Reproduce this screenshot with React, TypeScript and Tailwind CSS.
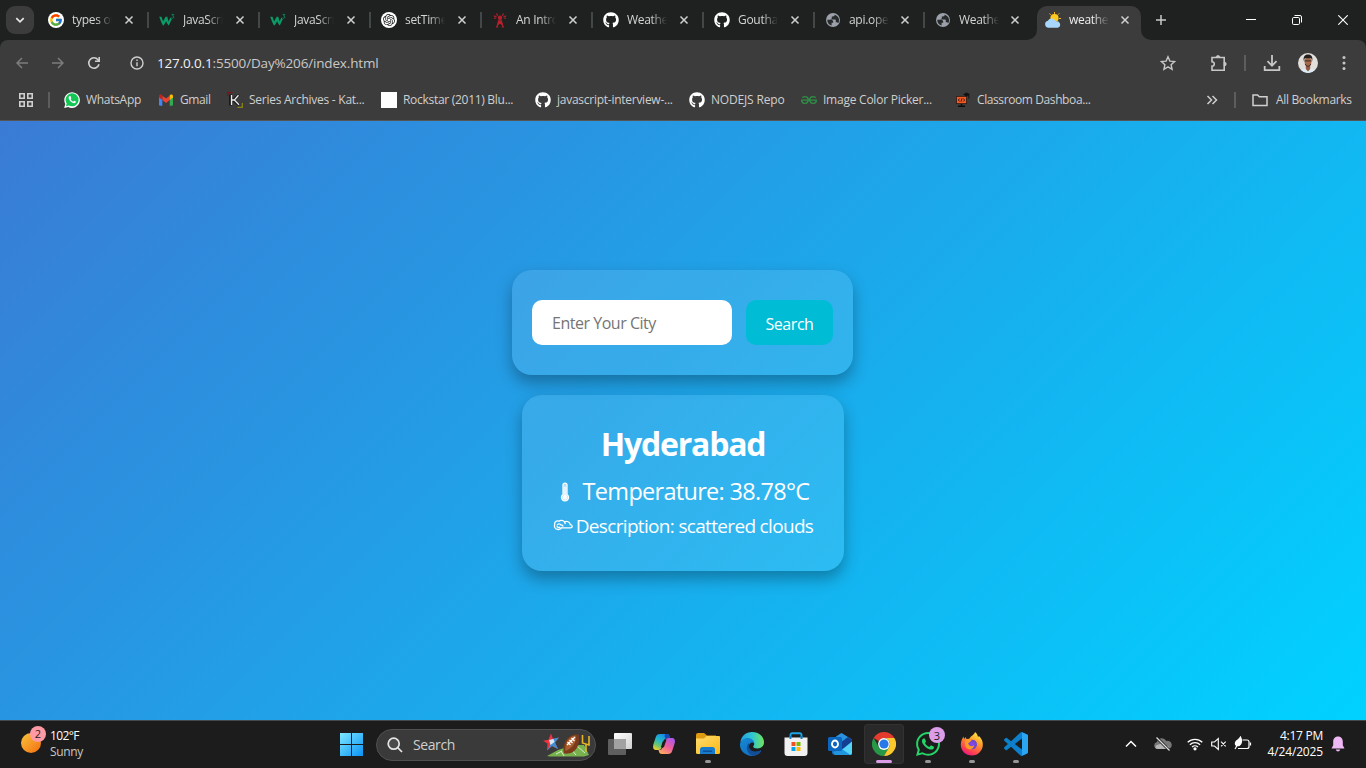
import type { ReactNode } from 'react';
import { FcGoogle } from 'react-icons/fc';
import { FaGithub, FaWhatsapp } from 'react-icons/fa';
import { SiGeeksforgeeks, SiOpenai } from 'react-icons/si';

/* ---------- favicons ---------- */

const GoogleIcon = () => (
  <span className="flex size-4 items-center justify-center rounded-full bg-white">
    <FcGoogle className="size-[14px]" />
  </span>
);

const W3Icon = () => (
  <svg viewBox="0 0 16 16" className="size-4" fill="none">
    <path d="M.2 4.800h2.300c.7 1.600 1 3.200 1.600 4.700C5 8 5.500 6.500 6.700 4.800h1.600c.5 1.700.8 3.200 1.300 4.700.7-1.400 1-2.500 1.900-3.900l1.300 1.700c-1.200 2-1.700 4-3 6.200-1.400-1.200-1.900-2.500-2.700-4.200-1 1.700-1.600 3.200-3 4.400C2.300 11 1.500 7.800.2 4.800Z" fill="#0b9b66" />
    <path d="M12.600 2.400h2.200l-1.200 1.600c1.700.2 1.600 2.300-.1 2.200-.5 0-.8-.2-1-.5" stroke="#0b8f60" strokeWidth=".9" />
  </svg>
);

const OpenAiIcon = () => (
  <span className="flex size-4 items-center justify-center rounded-full bg-white">
    <SiOpenai className="size-[12px] text-[#222]" />
  </span>
);

const TowerIcon = () => (
  <svg viewBox="0 0 16 16" className="size-4" fill="none" stroke="#b8202c" strokeWidth="1.200">
    <path d="M7.600 6 4.800 15.200M8.400 6l2.800 9.200M6.600 9.500l4 3.500M9.400 9.500l-4 3.500M6.600 9.300h2.800M4 15h2.300M9.700 15H12" />
    <circle cx="8" cy="5.600" r="1.500" fill="#b8202c" />
    <path d="M5.600 3.700 4.500 1.500M4.600 5.300 2 3.800M2 6.200l1.500.2M10.400 3.700l1.100-2.200M11.400 5.300 14 3.800M14 6.200l-1.500.2" />
  </svg>
);

const GithubIcon = () => <FaGithub className="size-4 text-white" />;

const GlobeIcon = () => (
  <svg viewBox="0 0 16 16" className="size-4">
    <circle cx="8" cy="8" r="7" fill="#9ba0a9" />
    <path d="M2.300 7.800h3.500c1.500 0 2.400.8 2.400 2.200v.8H6.600v2.700C4 12.900 2.200 10.700 2.300 7.800ZM9.700 2.700c-.1 1.200-.7 1.700-1.800 1.700H6.800v1.700c0 .7-.5 1-1.200 1v.4h4.200c.7 0 1 .4 1 1v1.700h.8c.8 0 1.200.4 1.500 1.100 1.800-2.300 1.400-7-3.400-8.600Z" fill="#272b2c" />
  </svg>
);

const WeatherIcon = () => (
  <svg viewBox="0 0 16 16" className="size-4">
    <path d="M9.500 0v2M4.500 1.500l1.200 1.400M14.300 1.300 13 2.700M16 6.500h-2M14.300 11.500 13 10" stroke="#f7b21a" strokeWidth="1" />
    <circle cx="9.500" cy="6" r="4.100" fill="#ffc81e" />
    <path d="M3.700 15.800a3.600 3.600 0 0 1-.8-7.100 4.300 4.300 0 0 1 7.900.8 3.200 3.200 0 1 1 2 6.300Z" fill="#a8d7fb" />
  </svg>
);

const WhatsappFavicon = () => (
  <svg viewBox="0 0 16 16" className="size-4">
    <path d="M.2 16 1.300 12A7.800 7.800 0 1 1 4.200 14.900z" fill="#fff" />
    <path d="m1.900 14.200.8-2.700a6.500 6.500 0 1 1 2.200 2z" fill="#14c656" />
    <path d="M5.500 4.100c-1.200.8-1 2.200-.3 3.400 1.200 2 2.700 3.400 4.800 3.800 1 .1 2-.7 1.900-1.700L10.100 8.700l-.9 1C8 9.200 7.200 8.400 6.600 7.300l.7-.9-.7-2.100c-.3-.3-.8-.4-1.100-.2z" fill="#fff" />
  </svg>
);

const GmailIcon = () => (
  <svg viewBox="0 0 16 16" className="size-4">
    <path d="M1 4.500 4.300 7v6.700H2.200A1.200 1.200 0 0 1 1 12.500z" fill="#4285f4" />
    <path d="M15 4.500 11.700 7v6.700h2.100a1.200 1.200 0 0 0 1.200-1.200z" fill="#34a853" />
    <path d="M4.300 3.700 8 6.500l3.700-2.800v4.400L8 10.900 4.300 8.100z" fill="#ea4335" />
    <path d="M1 4c0-1.600 1.700-2 2.700-1.200l.6.500v4.800L1 5.600z" fill="#c5221f" />
    <path d="M15 4c0-1.600-1.700-2-2.700-1.200l-.6.500v4.800L15 5.600z" fill="#fbbc04" />
  </svg>
);

const KIcon = () => (
  <svg viewBox="0 0 16 16" className="size-4" fill="none">
    <path d="M.7 4V.7H5.500" stroke="#7f1118" strokeWidth="1.300" />
    <path d="M10.500 15.300h4.800V11" stroke="#8a8113" strokeWidth="1.300" />
    <path d="M3.500 2.500v11M6 8l6-5M6 8l6 5" stroke="#151515" strokeWidth="2.600" />
    <path d="M4.500 3v10M5 8h2.300M11.500 3.200 7.300 8l4.700 4.800" stroke="#ececec" strokeWidth="1.300" />
  </svg>
);

const BlankIcon = () => <span className="block size-4 bg-white" />;
const GfgIcon = () => <SiGeeksforgeeks className="size-4 text-[#2f8d46]" />;

const ClassroomIcon = () => (
  <svg viewBox="0 0 16 16" className="size-4">
    <path d="M8 2.500 11.500.6 15 2.300 11.500 4.500z" fill="#15110f" />
    <rect x="1" y="4" width="11" height="8" rx="1" fill="#1b1310" />
    <rect x="1.800" y="4.700" width="9.400" height="6.600" rx=".6" fill="#ef5a26" />
    <path d="M4.700 6.500 3.300 8l1.400 1.500M8.300 6.500 9.700 8 8.300 9.500M7 6.300 6 9.700" fill="none" stroke="#25140e" strokeWidth=".9" />
    <path d="M6.500 12v2M3 14.300h7" stroke="#0d0d0d" strokeWidth="1.400" />
    <path d="m13.700 2.800.3 4" stroke="#111" />
  </svg>
);

/* ---------- browser chrome ---------- */

type TabInfo = { icon: ReactNode; title: string; wide: boolean; last?: boolean };

const tabs: TabInfo[] = [
  { icon: <GoogleIcon />, title: 'types of', wide: true },
  { icon: <W3Icon />, title: 'JavaScri', wide: true },
  { icon: <W3Icon />, title: 'JavaScri', wide: true },
  { icon: <OpenAiIcon />, title: 'setTime', wide: true },
  { icon: <TowerIcon />, title: 'An Intro', wide: true },
  { icon: <GithubIcon />, title: 'Weathe', wide: true },
  { icon: <GithubIcon />, title: 'Goutha', wide: true },
  { icon: <GlobeIcon />, title: 'api.ope', wide: false },
  { icon: <GlobeIcon />, title: 'Weathe', wide: false, last: true },
];

const CloseX = () => (
  <svg viewBox="0 0 10 10" className="size-[10px] shrink-0 text-[#d0d0d0]" stroke="currentColor" strokeWidth="1.500">
    <path d="M1.500 1.500l7 7M8.500 1.500l-7 7" />
  </svg>
);

const titleClass =
  'w-10 shrink-0 overflow-hidden whitespace-nowrap text-[12px] leading-4 tracking-[-0.300px] [mask-image:linear-gradient(to_right,black_60%,transparent_100%)]';

const Tab = ({ icon, title, wide, last }: TabInfo) => (
  <div className={`flex h-10 shrink-0 items-center ${wide ? 'w-[111px] pl-[10px]' : 'w-[110px] pl-[10px]'}`}>
    {icon}
    <span className={`ml-2 text-[#d3d5d5] ${titleClass}`}>{title}</span>
    <span className={`mr-auto ${wide ? 'ml-3' : 'ml-[11px]'}`}><CloseX /></span>
    <span className={`h-4 w-[2px] ${last ? '' : 'bg-[#444747]'}`} />
  </div>
);

const TabStrip = () => (
  <div className="flex h-10 bg-[#1f2120]">
    <button className="ml-[6px] mr-1 mt-[6px] flex size-7 shrink-0 items-center justify-center rounded-[9px] bg-[#3c3c3c]">
      <svg viewBox="0 0 10 10" className="size-[10px]" fill="none" stroke="#e6e6e6" strokeWidth="1.700">
        <path d="M1.300 3.200 5 6.900l3.700-3.700" />
      </svg>
    </button>
    {tabs.map((t, i) => <Tab key={i} {...t} />)}
    <div className="-ml-2 flex shrink-0 items-end">
      <svg viewBox="0 0 10 10" className="size-[10px]"><path d="M10 0v10H0A10 10 0 0 0 10 0Z" fill="#3c3c3c" /></svg>
      <div className="flex h-[34px] w-[104px] items-center rounded-t-[10px] bg-[#3c3c3c] pb-[6px] pl-2">
        <WeatherIcon />
        <span className={`ml-2 text-[#ececec] ${titleClass}`}>weathe</span>
        <span className="ml-[11px]"><CloseX /></span>
      </div>
      <svg viewBox="0 0 10 10" className="size-[10px]"><path d="M0 0v10h10A10 10 0 0 1 0 0Z" fill="#3c3c3c" /></svg>
    </div>
    <div className="flex h-10 items-center pl-[4px]">
      <svg viewBox="0 0 12 12" className="size-3" stroke="#c8c8c8" strokeWidth="1.500"><path d="M6 1v10M1 6h10" /></svg>
    </div>
    <div className="ml-auto flex h-10 items-center gap-[36px] pr-[18px] text-white">
      <svg viewBox="0 0 10 10" className="size-[10px]" stroke="currentColor"><path d="M0 4.500h10" /></svg>
      <svg viewBox="0 0 10 10" className="size-[10px]" fill="none" stroke="currentColor">
        <rect x=".5" y="2.500" width="7" height="7" rx="1.200" /><path d="M2.500.5H8A1.500 1.500 0 0 1 9.500 2v5.500" />
      </svg>
      <svg viewBox="0 0 10 10" className="size-[10px]" stroke="currentColor" strokeWidth="1.100"><path d="M.3.3l9.400 9.400M9.700.3.3 9.700" /></svg>
    </div>
  </div>
);

const Avatar = () => (
  <svg viewBox="0 0 20 20" className="size-5">
    <defs><clipPath id="face"><circle cx="10" cy="10" r="10" /></clipPath></defs>
    <g clipPath="url(#face)">
      <rect width="20" height="20" fill="#e2dfdb" />
      <path d="M2 20c1-4 4-5 8-5s7 1 8 5z" fill="#dceaf4" />
      <path d="M7.800 12h4.400v4L10 18.500 7.800 16z" fill="#925c42" />
      <ellipse cx="10" cy="8.800" rx="3.500" ry="4.700" fill="#a66b4d" />
      <path d="M5.800 8C5 4 6.500 1.500 10 1.500S15 4 14.200 8l-1-2.700H6.800z" fill="#25201e" />
      <path d="M6.500 7.900h7M7.300 11c1 3 4.400 3 5.400 0" fill="none" stroke="#3b2822" strokeWidth="1" />
    </g>
  </svg>
);

const Toolbar = () => (
  <div className="flex h-[46px] items-center rounded-t-[8px] bg-[#3c3c3c] pl-4 pr-[14px] text-[#c7c7c7]">
    <svg viewBox="0 0 12 12" className="size-3" fill="none" stroke="#7c7c7c" strokeWidth="1.500"><path d="M12 6H1M6 1 1 6l5 5" /></svg>
    <svg viewBox="0 0 12 12" className="ml-6 size-3" fill="none" stroke="#7c7c7c" strokeWidth="1.500"><path d="M0 6h11M6 1l5 5-5 5" /></svg>
    <svg viewBox="0 0 14 14" className="ml-[23px] size-[14px]" fill="none" stroke="#cfcfcf" strokeWidth="1.600">
      <path d="M12 8.300A5.200 5.200 0 1 1 11 3.700L12 5" /><path d="M12.200 1v4.200H8" />
    </svg>
    <svg viewBox="0 0 14 14" className="ml-[29px] size-[14px]" fill="none" stroke="#cfcfcf" strokeWidth="1.400">
      <circle cx="7" cy="7" r="6" /><path d="M7 6.200v4M7 3.600V5" />
    </svg>
    <span className="ml-[13px] whitespace-nowrap text-[13.500px] leading-5 tracking-[-0.160px] text-[#c9c9c9]">
      <span className="text-[#f2f2f2]">127.0.0.1</span>:5500/Day%206/index.html
    </span>
    <svg viewBox="0 0 16 16" className="ml-auto size-4" fill="none" stroke="currentColor" strokeWidth="1.400">
      <path d="m8 1.800 1.900 4.300 4.700.5-3.500 3.100 1 4.600L8 11.900l-4.100 2.400 1-4.600-3.500-3.100 4.700-.5z" />
    </svg>
    <svg viewBox="0 0 18 18" className="ml-[34px] size-[18px]" fill="none" stroke="currentColor" strokeWidth="1.600">
      <path d="M2 3.500h12.200v12.700H2v-4c2.800.1 3.300-4.500 0-4.500z" /><path d="M6 3.500a2 2 0 0 1 4 0zM14.200 8a2 2 0 0 1 0 4z" fill="currentColor" strokeWidth=".8" />
    </svg>
    <span className="ml-[16px] h-4 w-[2px] bg-[#5d5d5d]" />
    <svg viewBox="0 0 18 18" className="ml-[17px] size-[18px]" fill="none" stroke="currentColor" strokeWidth="1.800">
      <path d="M9 1v10.500M4.500 7.200 9 11.700l4.500-4.500M1.700 12v4.200h14.600V12" />
    </svg>
    <span className="ml-[17px]"><Avatar /></span>
    <svg viewBox="0 0 16 16" className="ml-[18px] size-4" fill="currentColor">
      <circle cx="8" cy="2.500" r="1.500" /><circle cx="8" cy="8" r="1.500" /><circle cx="8" cy="13.500" r="1.500" />
    </svg>
  </div>
);

const bookmarks = [
  { icon: <WhatsappFavicon />, label: 'WhatsApp', cls: 'w-[94px] tracking-[-0.300px]' },
  { icon: <GmailIcon />, label: 'Gmail', cls: 'w-[69px] tracking-[-0.400px]' },
  { icon: <KIcon />, label: 'Series Archives - Kat...', cls: 'w-[154px] tracking-[-0.260px]' },
  { icon: <BlankIcon />, label: 'Rockstar (2011) Blu...', cls: 'w-[154px] tracking-[-0.290px]' },
  { icon: <GithubIcon />, label: 'javascript-interview-...', cls: 'w-[154px] tracking-[-0.260px]' },
  { icon: <GithubIcon />, label: 'NODEJS Repo', cls: 'w-[112px] tracking-[-0.170px]' },
  { icon: <GfgIcon />, label: 'Image Color Picker...', cls: 'w-[154px] tracking-[-0.240px]' },
  { icon: <ClassroomIcon />, label: 'Classroom Dashboa...', cls: 'w-[154px] tracking-[-0.400px]' },
];

const BookmarkBar = () => (
  <div className="flex h-[35px] items-center border-b border-[#555] bg-[#3c3c3c] pb-[6px] pl-[19px] text-[12px] leading-4 text-[#cfcfcf]">
    <svg viewBox="0 0 14 14" className="size-[14px]" fill="none" stroke="currentColor" strokeWidth="1.600">
      <path d="M.8.8h4.400v4.400H.8zM8.800.8h4.400v4.400H8.800zM.8 8.800h4.400v4.400H.8zM8.800 8.800h4.400v4.400H8.800z" />
    </svg>
    <span className="ml-[15px] mr-[14px] h-4 w-[2px] bg-[#5d5d5d]" />
    {bookmarks.map((b) => (
      <div key={b.label} className={`flex shrink-0 items-center gap-[6px] whitespace-nowrap ${b.cls}`}>
        {b.icon}<span>{b.label}</span>
      </div>
    ))}
    <svg viewBox="0 0 12 12" className="ml-auto size-3" fill="none" stroke="currentColor" strokeWidth="1.500"><path d="m1.500 2 4 4-4 4M6.500 2l4 4-4 4" /></svg>
    <span className="ml-[16px] h-4 w-[2px] bg-[#5d5d5d]" />
    <svg viewBox="0 0 16 14" className="ml-[16px] h-[14px] w-4" fill="none" stroke="currentColor" strokeWidth="1.500">
      <path d="M1 2h4.600l1.700 1.800H15v8.700H1z" />
    </svg>
    <span className="ml-2 w-[90px] whitespace-nowrap tracking-[-0.330px]">All Bookmarks</span>
  </div>
);

/* ---------- weather page ---------- */

const WeatherPage = () => (
  <main className="flex h-[599px] flex-col items-center gap-5 bg-[linear-gradient(135deg,#3a7bd5,#00d2ff)] pt-[149px]">
    <form className="mr-px flex h-[105px] w-[341px] items-center justify-between rounded-[20px] bg-white/10 px-5 shadow-[0_8px_16px_rgba(0,0,0,0.300)]">
      <input
        placeholder="Enter Your City"
        className="h-[45px] w-[200px] rounded-[10px] bg-white px-5 text-[16px] tracking-[-0.480px] outline-none placeholder:text-[#757575]"
      />
      <button type="button" className="h-[45px] w-[87px] rounded-[10px] bg-[#00bcd4] pt-[2px] text-[16px] tracking-[-0.450px] text-white">Search</button>
    </form>
    <section className="flex h-[176px] w-[322px] flex-col items-center rounded-[20px] bg-white/10 pt-[27px] text-white shadow-[0_8px_16px_rgba(0,0,0,0.300)]">
      <h2 className="text-[32px] font-bold leading-[43px] tracking-[-1.200px]">Hyderabad</h2>
      <p className="mt-[10px] flex h-8 items-center whitespace-nowrap text-[23.500px] leading-8 tracking-[-0.700px]">
        <svg viewBox="0 0 16 22" className="mr-[10px] mt-[2px] h-[20px] w-4 shrink-0">
          <path d="M5.800 3.400a2.200 2.200 0 0 1 4.400 0v10.300a3.900 3.900 0 1 1-4.400 0z" fill="#ffffff99" stroke="#fff" strokeWidth="1.400" />
          <path d="M8 5v11" stroke="#fff" strokeWidth="1.500" /><circle cx="8" cy="17" r="2.600" fill="#fff" />
        </svg>
        Temperature: 38.78°C
      </p>
      <p className="mt-[7px] flex h-6 items-center whitespace-nowrap text-[19px] leading-6 tracking-[-0.670px]">
        <svg viewBox="0 0 20 12" className="-mt-[3px] mr-[3px] h-3 w-5 shrink-0" fill="none" stroke="#fff" strokeWidth="1.300">
          <path d="M8 8.800h9.500c2.300 0 2.300-3-.2-3.200C16.800 3 14 1.500 11.500 2.800 10 1 7.500.9 6 2.200 3.400 1.300 1.300 3 1.700 5.200c-.9 2.300.3 5.400 3.500 5.300C7 10.300 8.500 9.500 8.500 8" />
          <path d="M4 6.500C4.300 4.300 7.200 4.300 8 6c1.200-.3 2 .6 1.800 1.700M11.500 2.800l.8 2.300M7.300 8c-1.500.8-3 .6-3.500-.8" />
        </svg>
        Description: scattered clouds
      </p>
    </section>
  </main>
);

/* ---------- taskbar ---------- */

const StartIcon = () => (
  <svg viewBox="0 0 23 23" className="size-[23px]">
    <defs><linearGradient id="win" x1="0" y1="0" x2="1" y2="1"><stop stopColor="#7ee8ff" /><stop offset="1" stopColor="#0a93f5" /></linearGradient></defs>
    <path d="M0 0h11v11H0zM12 0h11v11H12zM0 12h11v11H0zM12 12h11v11H12z" fill="url(#win)" />
  </svg>
);

const FootballArt = () => (
  <svg viewBox="0 0 50 26" className="h-[26px] w-[50px]">
    <path d="M5 24 16 18l15-5h11l5 10-5 1.500H8z" fill="#78b24e" />
    <path d="M14 22l6-3M22 24l-3-5M34 23l-5-6M43 21l-8-7" stroke="#d6ecc5" strokeWidth="1" />
    <path d="m9 1.500 2 5.200 6-1.200-4 5 3 6.500-6-3-5 4.500.5-7L1 8.700l5.500-.9z" fill="#ef3340" />
    <path d="m9 7 2-.3 6-1.200-4 5 3 6.500-6-3-5 4.500 4-7z" fill="#3e8ed0" />
    <path d="m7 8 4.500-1 1 3-4 3z" fill="#dbe7f1" />
    <path d="M22 21.500c-2.500-9 3-20 14.500-19C39 12 34 23 22 21.500Z" fill="#7c3b1b" />
    <path d="M23.500 19c-1-7 3-15 10-15.500 2 5.500-3 13-10 15.500Z" fill="#a9602f" />
    <path d="m25 13 8-8M25.500 10l3 3M27.500 8l3 3M29.500 6l3 3" stroke="#fff" strokeWidth="1.300" />
    <path d="M40.500 3v8l6.500 2V4M44 12.500V20" fill="none" stroke="#e6b422" strokeWidth="1.600" />
  </svg>
);

const TaskViewIcon = () => (
  <svg viewBox="0 0 24 24" className="size-6">
    <defs><linearGradient id="tv" x1="0" y1="0" x2="1" y2="1"><stop stopColor="#fff" /><stop offset="1" stopColor="#d0d0d0" /></linearGradient></defs>
    <rect x="6" y="1" width="18" height="16" rx="1" fill="url(#tv)" />
    <rect x="0" y="7" width="18" height="16" rx="1" fill="#5f5f5f" />
    <path d="M6 7h11a1 1 0 0 1 1 1v9H6z" fill="#a2a2a2" />
  </svg>
);

const CopilotIcon = () => (
  <svg viewBox="0 0 24 24" className="size-6">
    <defs>
      <linearGradient id="cpa" x1=".7" y1="0" x2=".2" y2="1"><stop stopColor="#1688e8" /><stop offset=".45" stopColor="#25b8c8" /><stop offset=".75" stopColor="#72c66b" /><stop offset="1" stopColor="#f2d130" /></linearGradient>
      <linearGradient id="cpb" x1=".8" y1="0" x2=".2" y2="1"><stop stopColor="#a657ed" /><stop offset=".5" stopColor="#ee5e9b" /><stop offset="1" stopColor="#ffad60" /></linearGradient>
    </defs>
    <path d="M7.500 2H15c2 0 2.400 1.200 3 4h-3c-2 0-2.500 1.500-3 3l-2 6c-.7 2-1.500 3-3.500 3H4c-3 0-3.300-3-2.500-6L4 4.500C4.600 3 5.800 2 7.500 2Z" fill="url(#cpa)" />
    <path d="M13 2h2c2 0 2.500 1.500 3 4h-4c-1 0-2-1-1-4Z" fill="#1746b7" />
    <path d="M16.500 22H10c-2 0-2.800-1-3.500-4 2.300.4 3.500-.7 4-2.500l2.300-6.500C13.500 7 14.500 6 16.500 6H20c3 0 3.400 2.600 2.600 5.500L20 19.500c-.5 1.500-1.800 2.500-3.500 2.500Z" fill="url(#cpb)" />
    <path d="m10.500 10 2-2.500h2L12 15l-2 1-1-1z" fill="#1c1c1c" />
  </svg>
);

const FolderIcon = () => (
  <svg viewBox="0 0 24 24" className="size-6">
    <defs><linearGradient id="fo" x1="0" y1="0" x2="1" y2="1"><stop stopColor="#ffdc70" /><stop offset="1" stopColor="#fdb913" /></linearGradient></defs>
    <path d="M0 3a2 2 0 0 1 2-2h6l3 2.500h9V9H0z" fill="#de9b12" />
    <path d="M0 6.500h8L10.500 4H23a1 1 0 0 1 1 1v15.500a1.500 1.500 0 0 1-1.500 1.500h-21A1.500 1.500 0 0 1 0 20.500z" fill="url(#fo)" />
    <path d="M4 22v-4.500a2.500 2.500 0 0 1 2.500-2.500h10a2.500 2.500 0 0 1 2.500 2.500V22z" fill="#177acb" /><rect x="7" y="18.500" width="9" height="1.500" fill="#0c4f9a" />
  </svg>
);

const EdgeIcon = () => (
  <svg viewBox="0 0 24 24" className="size-6">
    <defs>
      <linearGradient id="eg" x1="0" y1=".3" x2="1" y2=".3"><stop stopColor="#249fdf" /><stop offset=".5" stopColor="#30c6d2" /><stop offset="1" stopColor="#70e45a" /></linearGradient>
      <linearGradient id="eb" x1="0" y1="0" x2=".7" y2="1"><stop stopColor="#158ad6" /><stop offset="1" stopColor="#126cbb" /></linearGradient>
    </defs>
    <path d="M.3 10.500C1.200 4 6 0 12 0c7 0 12 4.800 12 10.300 0 4-3 6.200-6.300 6.200-3 0-4.500-1-4.500-2 0-.6 1-1 1-2.500C14.200 9 11 7 7.700 7 4 7 1.500 8.800.3 10.500Z" fill="url(#eg)" />
    <path d="M0 12c.8-3.500 4-6 7.600-6 4 0 6.700 2.600 6.700 5.500-1.500-2-5-1-5.400 2.400-.5 4.500 5.500 7.600 11.100 4.800.8-.3 1.200.3.800.9C18.900 22.500 16 24 12 24 5 24-.4 18.500 0 12Z" fill="url(#eb)" />
    <path d="M9 11c-4 4-2 11 4.300 12.900 3-.3 5.800-1.800 7.500-4.300.5-.7 0-1.200-.8-.9-5.600 2.800-11.600-.3-11-4.800z" fill="#124d97" />
  </svg>
);

const StoreIcon = () => (
  <svg viewBox="0 0 24 24" className="size-6">
    <path d="M6.500 7V2.800A1.600 1.600 0 0 1 8.100 1.200h7.800a1.600 1.600 0 0 1 1.600 1.600V7" fill="none" stroke="#19a6e8" strokeWidth="1.900" />
    <path d="M.5 5.500h23v15.500a3 3 0 0 1-3 3h-17a3 3 0 0 1-3-3z" fill="#f1f1f1" />
    <path d="M6.500 4v3M17.500 4v3" stroke="#0f7bc4" strokeWidth="1.900" />
    <path d="M7.500 10h4v4h-4z" fill="#f25022" /><path d="M12.500 10h4v4h-4z" fill="#7fba00" /><path d="M7.500 15h4v4h-4z" fill="#00a4ef" /><path d="M12.500 15h4v4h-4z" fill="#ffb900" />
  </svg>
);

const OutlookIcon = () => (
  <svg viewBox="0 0 24 24" className="size-6">
    <path d="M4 8 13 1.500 24 8v13a2 2 0 0 1-2 2H7a3 3 0 0 1-3-3z" fill="#1673c5" />
    <path d="M8 4.500 13.500 1 24 7.500 15 13z" fill="#2a92df" /><path d="M14 9.500 20 5l4 3v6l-10 3z" fill="#123f91" />
    <path d="M24 9.500V21a2 2 0 0 1-2 2H7l9-7z" fill="#55d4f7" /><path d="m5 20 9-3 8.500 6H7z" fill="#2295df" />
    <rect y="5" width="14" height="14" rx="1.500" fill="#0d66be" />
    <ellipse cx="7" cy="12" rx="3" ry="3.500" fill="none" stroke="#fff" strokeWidth="1.900" />
  </svg>
);

const ChromeIcon = () => (
  <svg viewBox="0 0 24 24" className="size-6">
    <path d="M12 12 1.600 6A12 12 0 0 1 22.400 6H12z" fill="#e33b2e" />
    <path d="M1.600 6A12 12 0 0 0 12 24l5.200-9L12 12 6.800 15z" fill="#279847" />
    <path d="M22.400 6A12 12 0 0 1 12 24l5.200-9A6 6 0 0 0 12 6z" fill="#fcc92c" />
    <circle cx="12" cy="12" r="5.900" fill="#fff" /><circle cx="12" cy="12" r="4.600" fill="#2878e8" />
  </svg>
);

const FirefoxIcon = () => (
  <svg viewBox="0 0 24 24" className="size-6">
    <defs>
      <linearGradient id="ff" x1=".8" y1="0" x2=".3" y2="1"><stop stopColor="#fff14a" /><stop offset=".4" stopColor="#ff9b28" /><stop offset=".8" stopColor="#ff3f50" /><stop offset="1" stopColor="#e31587" /></linearGradient>
      <radialGradient id="fp"><stop stopColor="#8f48e7" /><stop offset="1" stopColor="#6547cf" /></radialGradient>
    </defs>
    <path d="M3.500 4.500 4 7l2-2 .3 2 3-.2C11 3.500 14 3.500 15 0c2.200 1.500 2.600 3.300 3 5l1-1c3 3 3.800 5.500 3.800 8.500A10.900 10.900 0 0 1 12 23.500C5.500 23.500.8 18.800.8 13c0-3 1-6 2.700-8.500Z" fill="url(#ff)" />
    <circle cx="12.200" cy="12.500" r="4.800" fill="url(#fp)" />
    <path d="M6 8c2-1.700 4-1 6 .7-2 0-1.600 2-3.800 2.300.7 3.500 4 3.800 6 2.300-.5 3.500-3.600 4.700-6 3.800C5.200 16 4 11.500 6 8Z" fill="#ff9b25" />
  </svg>
);

const VscodeIcon = () => (
  <svg viewBox="0 0 24 24" className="size-6">
    <path d="M23.150 2.587 18.210.210a1.494 1.494 0 0 0-1.705.290l-9.460 8.630-4.120-3.128a.999.999 0 0 0-1.276.057L.327 7.261A1 1 0 0 0 .326 8.740L3.899 12 .326 15.260a1 1 0 0 0 .001 1.479L1.650 17.940a.999.999 0 0 0 1.276.057l4.120-3.128 9.460 8.630a1.492 1.492 0 0 0 1.704.290l4.942-2.377A1.500 1.500 0 0 0 24 20.060V3.939a1.500 1.500 0 0 0-.850-1.352zm-5.146 14.861L10.826 12l7.178-5.448v10.896z" fill="#0d7fcb" />
    <path d="M18 .2 23.150 2.600A1.500 1.500 0 0 1 24 3.900v16.200a1.500 1.500 0 0 1-.850 1.300L18 23.800z" fill="#2ba4f3" />
  </svg>
);

const WhatsappTask = () => (
  <span className="relative block size-6">
    <FaWhatsapp className="size-6 scale-[1.140] text-[#25d366]" />
    <span className="absolute -right-[5px] -top-[5px] flex size-4 items-center justify-center rounded-full bg-[#dc9ce8] text-[11px] leading-none text-[#202020]">3</span>
  </span>
);

const apps: { name: string; icon: ReactNode; mark: string; tile?: boolean }[] = [
  { name: 'view', icon: <TaskViewIcon />, mark: 'w-0' },
  { name: 'copilot', icon: <CopilotIcon />, mark: 'w-0' },
  { name: 'files', icon: <FolderIcon />, mark: 'w-[6px] bg-[#969696]' },
  { name: 'edge', icon: <EdgeIcon />, mark: 'w-0' },
  { name: 'store', icon: <StoreIcon />, mark: 'w-0' },
  { name: 'outlook', icon: <OutlookIcon />, mark: 'w-0' },
  { name: 'chrome', icon: <ChromeIcon />, mark: 'w-4 bg-[#dc9ce8]', tile: true },
  { name: 'whatsapp', icon: <WhatsappTask />, mark: 'w-[6px] bg-[#969696]' },
  { name: 'firefox', icon: <FirefoxIcon />, mark: 'w-[6px] bg-[#969696]' },
  { name: 'vscode', icon: <VscodeIcon />, mark: 'w-[6px] bg-[#969696]' },
];

const Taskbar = () => (
  <footer className="flex h-12 items-center border-t border-[#42484b] bg-[#1c1c1c] text-white">
    <div className="flex w-[340px] items-center pb-[2px] pl-[20px]">
      <span className="relative block size-[22px]">
        <span className="absolute left-[1px] top-0 size-5 rounded-full bg-linear-to-br from-[#f5c53b] to-[#f26a0c]" />
        <span className="absolute left-[10px] -top-[7px] flex size-4 items-center justify-center rounded-full bg-[#ff99a4] text-[11px] leading-none text-[#2a2022]">2</span>
      </span>
      <div className="ml-2 text-[12px] leading-4 tracking-[-0.350px]">
        <div className="tracking-[-0.600px]">102°F</div>
        <div className="text-[#c8c8c8]">Sunny</div>
      </div>
    </div>
    <StartIcon />
    <div className="ml-[13px] flex h-8 w-[220px] items-center rounded-full border border-[#505050] bg-[#3a3a3a] pl-[10px]">
      <svg viewBox="0 0 16 16" className="size-4" fill="none" stroke="#e5e5e5" strokeWidth="1.700"><circle cx="6.700" cy="6.700" r="5.500" fill="#4b4b4b" /><path d="m10.700 10.700 4.300 4.300" /></svg>
      <span className="ml-[10px] text-[14px] tracking-[-0.400px] text-[#cfcfcf]">Search</span>
      <span className="ml-auto mr-[3px]"><FootballArt /></span>
    </div>
    <div className="ml-[2px] flex">
      {apps.map((a) => (
        <div key={a.name} className="flex h-[47px] w-11 flex-col items-center">
          <div className={`mt-[3px] flex h-10 w-10 flex-col items-center rounded-[4px] pt-2 ${a.tile ? 'bg-[#292929] ring-1 ring-inset ring-[#323232]' : ''}`}>
            {a.icon}
            <span className={`mt-[4px] h-[3px] rounded-full ${a.mark}`} />
          </div>
        </div>
      ))}
    </div>
    <div className="ml-auto flex items-center pb-px pr-[21px]">
      <svg viewBox="0 0 12 8" className="h-2 w-3" fill="none" stroke="#fff" strokeWidth="1.500"><path d="m1 6.500 5-5 5 5" /></svg>
      <svg viewBox="0 0 18 16" className="ml-[17px] h-4 w-[18px]">
        <path d="M3.500 13a3.500 3.500 0 0 1-.6-6.900A5 5 0 0 1 12.300 5a4 4 0 0 1 2.500 8z" fill="#777" /><path d="M4 13c-4-.3-3-4.500 1-4.500 2-2 6-1.500 7 1.500 3-.5 4 2 2.300 3z" fill="#b5b5b5" />
        <path d="m2.500 1.500 13 13" stroke="#1c1c1c" strokeWidth="2.800" /><path d="m2.500 1.500 13 13" stroke="#dedede" strokeWidth="1.200" />
      </svg>
      <svg viewBox="0 0 16 14" className="ml-[15px] h-[14px] w-4" fill="none" stroke="#fff" strokeWidth="1.300">
        <path d="M.7 5.300a10.500 10.500 0 0 1 14.600 0M2.900 7.700a7.300 7.300 0 0 1 10.200 0M5.100 10a4.200 4.200 0 0 1 5.800 0" /><circle cx="8" cy="11.800" r="1" fill="#fff" />
      </svg>
      <svg viewBox="0 0 16 14" className="ml-2 h-[14px] w-4" fill="none" stroke="#f5f5f5" strokeWidth="1.200">
        <path d="M.7 5h2.800l3.800-3.500v11L3.500 9H.7zM10 4.700l4.700 4.700M14.700 4.700 10 9.400" />
      </svg>
      <svg viewBox="0 0 18 16" className="ml-[7px] h-4 w-[18px]" fill="none" stroke="#fff" strokeWidth="1.200">
        <path d="M8.500 4H13a2 2 0 0 1 2 2v4.500a2 2 0 0 1-2 2H4M16.500 6.500v3" /><path d="M6.500 1C8 4 8 8 5.300 9.500 2 10.500.5 8 2 5.500 3 4 5 4 6.500 1Z" fill="#fff" /><path d="M5 6 1 13" stroke="#fff" />
      </svg>
      <div className="ml-[14px] w-[57px] whitespace-nowrap text-right text-[12px] leading-4 tracking-[-0.150px]">
        <div className="tracking-[-0.250px]">4:17 PM</div>
        <div>4/24/2025</div>
      </div>
      <svg viewBox="0 0 14 16" className="ml-2 h-4 w-[14px]" fill="#efb9f5">
        <path d="M7 .5c3 0 4.800 2.200 4.800 5v3.800l1.700 3.200H.5l1.700-3.200V5.500C2.200 2.700 4 .5 7 .5ZM4.800 13.500h4.400C8.600 16 5.400 16 4.800 13.500Z" />
      </svg>
    </div>
  </footer>
);

export default function App() {
  return (
    <div className="flex h-[768px] w-[1366px] flex-col overflow-hidden bg-[#1f2120] font-['Open_Sans','Noto_Sans',sans-serif]">
      <TabStrip />
      <Toolbar />
      <BookmarkBar />
      <WeatherPage />
      <Taskbar />
    </div>
  );
}
